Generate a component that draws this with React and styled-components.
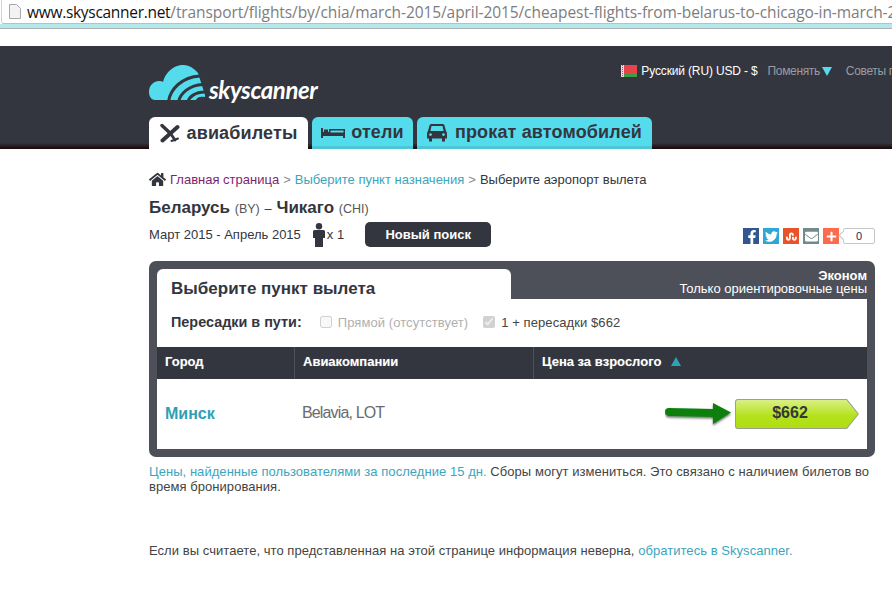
import React from 'react';
import styled, { createGlobalStyle } from 'styled-components';
import { FaHome, FaFacebookF, FaTwitter, FaStumbleupon, FaEnvelope, FaPlus } from 'react-icons/fa';

const Global = createGlobalStyle`
  html, body { margin: 0; padding: 0; background: #fff; overflow: hidden; }
  body { font-family: "Liberation Sans", Arial, sans-serif; color: #33363e; }
`;

const Page = styled.div`
  width: 892px;
  height: 605px;
  overflow: hidden;
`;

const AddressWrap = styled.div`
  height: 28px;
  border-bottom: 1px solid #aeb1b4;
  background: linear-gradient(#fff 24px, #b4e9ec 24px);
`;

const AddressBar = styled.div`
  height: 23px;
  margin-left: 1px;
  display: flex;
  align-items: center;
  gap: 6px;
  padding-left: 7px;
  background: #fff;
  border-left: 1px solid #b5dfe2;
  border-bottom: 1px solid #a9c6ca;
  border-bottom-left-radius: 3px;
  white-space: nowrap;
  overflow: hidden;
  font-family: "Open Sans", sans-serif;
  font-size: 15.5px;
  letter-spacing: -0.08px;
  color: #7d7d7d;
  svg { flex-shrink: 0; }
`;

const Host = styled.span`
  color: #111;
  letter-spacing: -0.3px;
`;

const Header = styled.header`
  margin-top: 17px;
  height: 103px;
  background: linear-gradient(#33363e 97px, #1a0708 103px);
  padding-left: 149px;
  box-sizing: border-box;
  display: flex;
  flex-direction: column;
  overflow: hidden;
`;

const TopRow = styled.div`
  height: 71px;
  display: flex;
  align-items: flex-start;
  white-space: nowrap;
`;

const Logo = styled.div`
  display: flex;
  align-items: flex-end;
  width: 170px;
  margin-top: 19px;
`;

const LogoText = styled.span`
  font-family: Lato, sans-serif;
  font-weight: 700;
  font-style: italic;
  font-size: 24px;
  line-height: 24px;
  letter-spacing: -0.4px;
  color: #fff;
  margin: 0 0 -1px 4px;
`;

const Locale = styled.div`
  display: flex;
  align-items: center;
  margin-left: 304px;
  margin-top: 18px;
  font-size: 12px;
  line-height: 14px;
  color: #fff;
`;

const LocaleText = styled.span`
  margin-left: 4px;
  letter-spacing: -0.15px;
`;

const Swap = styled.span`
  color: #9a9ca2;
  margin-left: 10px;
  letter-spacing: -0.35px;
`;

const Caret = styled.span`
  width: 0;
  height: 0;
  margin-left: 2px;
  border-left: 5px solid transparent;
  border-right: 5px solid transparent;
  border-top: 9px solid #55dcec;
`;

const Tips = styled(Swap)`
  margin-left: 14px;
`;

const Tabs = styled.nav`
  display: flex;
  gap: 4px;
`;

const Tab = styled.div`
  height: 32px;
  width: ${p => p.$width}px;
  box-sizing: border-box;
  display: flex;
  align-items: center;
  justify-content: center;
  gap: ${p => p.$gap || 4}px;
  border-radius: 6px 6px 0 0;
  font-size: 18px;
  font-weight: 700;
  letter-spacing: 0.15px;
  background: ${p => (p.$active ? '#fff' : '#55dcec')};
  border-bottom: ${p => (p.$active ? '0' : '3px solid #4bc6d6')};
  padding-top: ${p => (p.$active ? '0' : '2px')};
`;

const Main = styled.main`
  padding: 21px 17px 0 149px;
`;

const Crumbs = styled.div`
  display: flex;
  align-items: center;
  height: 18px;
  font-size: 13px;
  gap: 4px;
  white-space: pre;
`;

const Crumb = styled.span`
  color: ${p => p.$color || '#33363e'};
`;

const Title = styled.h1`
  margin: 11px 0 0;
  font-size: 17px;
  line-height: 18px;
  font-weight: 700;
`;

const Code = styled.span`
  font-size: 12.5px;
  font-weight: 400;
  color: #555;
`;

const Dash = styled.span`
  font-weight: 400;
  font-size: 13px;
`;

const MetaRow = styled.div`
  display: flex;
  align-items: center;
  height: 25px;
  margin-top: 4px;
  font-size: 13px;
`;

const PersonIcon = styled.svg`
  margin: 0 2px 0 12px;
`;

const NewSearch = styled.button`
  margin-left: 21px;
  width: 126px;
  height: 25px;
  border: 0;
  border-radius: 5px;
  background: #33363e;
  color: #fff;
  font-family: inherit;
  font-size: 13px;
  font-weight: 700;
`;

const Share = styled.div`
  margin-left: auto;
  display: flex;
  align-items: center;
  gap: 4px;
  margin-top: 3px;
`;

const ShareIcon = styled.span`
  width: 16px;
  height: 16px;
  display: flex;
  align-items: ${p => (p.$low ? 'flex-end' : 'center')};
  justify-content: ${p => (p.$low ? 'flex-end' : 'center')};
  background: ${p => p.$bg};
  color: #fff;
  font-size: ${p => p.$size || 11}px;
  overflow: hidden;
`;

const Count = styled.span`
  position: relative;
  width: 30px;
  height: 14px;
  border: 1px solid #c6c6c6;
  border-radius: 2px;
  font-size: 11px;
  line-height: 14px;
  text-align: center;
  color: #1b2a55;
  &::before {
    content: '';
    position: absolute;
    left: -4px;
    top: 3px;
    width: 6px;
    height: 6px;
    background: #fff;
    border-left: 1px solid #c6c6c6;
    border-bottom: 1px solid #c6c6c6;
    transform: rotate(45deg);
  }
`;

const Panel = styled.section`
  margin-top: 14px;
  background: #4d5059;
  border-radius: 7px;
  padding: 8px;
`;

const PanelTop = styled.div`
  display: flex;
  justify-content: space-between;
  height: 30px;
`;

const PanelTab = styled.h2`
  margin: 0;
  width: 354px;
  box-sizing: border-box;
  padding-left: 14px;
  background: #fff;
  border-radius: 6px 6px 0 0;
  font-size: 17px;
  line-height: 40px;
  font-weight: 700;
`;

const Cabin = styled.div`
  text-align: right;
  font-size: 13px;
  line-height: 13px;
  color: #fff;
`;

const Strong = styled.div`
  font-weight: 700;
`;

const PanelBody = styled.div`
  background: #fff;
`;

const Stops = styled.div`
  display: flex;
  align-items: center;
  height: 46px;
  padding: 0 0 2px 14px;
  font-size: 13px;
`;

const StopsLabel = styled.strong`
  font-size: 14.4px;
  margin-right: 18px;
`;

const Check = styled.input`
  margin: 0 6px 0 0;
  width: 12px;
  height: 12px;
`;

const Option = styled.label`
  display: flex;
  align-items: center;
  margin-right: 15px;
  letter-spacing: 0.08px;
  color: ${p => (p.$off ? '#b0b0b0' : '#444')};
`;

const Thead = styled.div`
  display: grid;
  grid-template-columns: 137px 239px 1fr;
  height: 32px;
  background: #33363e;
  color: #fff;
  font-size: 13px;
  font-weight: 700;
  text-shadow: 0 0 1px rgba(255, 255, 255, 0.3);
`;

const Th = styled.div`
  display: flex;
  align-items: center;
  padding: 0 0 3px 8px;
  border-left: ${p => (p.$first ? '0' : '1px solid #4d5059')};
`;

const SortUp = styled.span`
  margin-left: 10px;
  width: 0;
  height: 0;
  border-left: 5px solid transparent;
  border-right: 5px solid transparent;
  border-bottom: 9px solid #2aa5b8;
`;

const Row = styled.div`
  display: grid;
  grid-template-columns: 137px 239px 1fr;
  height: 70px;
  align-items: center;
`;

const City = styled.div`
  padding-left: 8px;
  font-size: 16px;
  font-weight: 700;
  color: #2f9fb5;
`;

const Airlines = styled.div`
  padding: 0 0 2px 8px;
  font-size: 16px;
  letter-spacing: -0.85px;
  color: #6b6b6b;
`;

const PriceCell = styled.div`
  display: flex;
  align-items: center;
  justify-content: flex-end;
  padding-right: 8px;
  gap: 2px;
`;

const PriceButton = styled.div`
  position: relative;
  width: 124px;
  height: 30px;
  background: #9a9f8e;
  clip-path: path('M3 0 H112 L124 15 L112 30 H3 Q0 30 0 27 V3 Q0 0 3 0 Z');
  &::before {
    content: '';
    position: absolute;
    inset: 0;
    background: linear-gradient(#dcf08c, #b4e31e 55%, #aedd10);
    clip-path: path('M3 1 H111.5 L122.8 15 L111.5 29 H3 Q1 29 1 27 V3 Q1 1 3 1 Z');
  }
`;

const PriceText = styled.span`
  position: absolute;
  inset: 0;
  text-align: center;
  font-size: 16px;
  font-weight: 700;
  line-height: 28px;
  color: #33363e;
  padding-right: 14px;
`;

const Note = styled.p`
  margin: 7px 0 0;
  font-size: 13px;
  line-height: 15px;
  letter-spacing: 0.05px;
  color: #444;
`;

const TealLink = styled.span`
  color: #3aa6bd;
`;

const Report = styled(Note)`
  margin-top: 49px;
`;

function SkyLogo() {
  return (
    <svg width="56" height="36" viewBox="0 0 56 36">
      <path
        fill="#55dcec"
        d="M6 35 C2 35 0 31 0 27 C0 20 5 16 10 16 C12 16 13 16 14 17 C16 8 24 1 32 0 C39 -0.5 45 3 49 8 L56 30 L56 35 Z"
      />
      <g fill="none" stroke="#33363e" strokeWidth="3">
        <path d="M19.5 37 C21 24 33 12 51 11" />
        <path d="M29.5 37 C31 29 40 20 54 19.5" />
        <path d="M39 37 C40 32 46 27 56 27" />
      </g>
      <path fill="#33363e" d="M46 37 C47 33 50 31 56 32 V37 Z" />
    </svg>
  );
}

function PlaneIcon() {
  return (
    <svg width="20" height="20" viewBox="0 0 20 20">
      <g fill="none" stroke="#33363e" strokeLinecap="round">
        <path strokeWidth="4" d="M2.5 17.5 L17.5 4" />
        <path strokeWidth="3.4" d="M2 2.5 L10.5 10.5" />
        <path strokeWidth="2.8" d="M10.5 10.5 L15 17" />
        <path strokeWidth="2" d="M11.5 18 L18 15.5" />
      </g>
    </svg>
  );
}

function BedIcon() {
  return (
    <svg width="24" height="10" viewBox="0 0 24 10">
      <path fill="#33363e" d="M0 0 H2 V4 H3 V1.5 H7 V4 H8 V1 H24 V10 H22 V8 H2 V10 H0 Z M9.5 2.5 V4.5 H22.5 V2.5 Z" fillRule="evenodd" />
    </svg>
  );
}

function CarIcon() {
  return (
    <svg width="20" height="18" viewBox="0 0 20 18">
      <path
        fill="#33363e"
        fillRule="evenodd"
        d="M4 0 H16 Q17 0 17.5 1.5 L19 7 Q20 8 20 10 V14.5 H18 V17.5 H15 V14.5 H5 V17.5 H2 V14.5 H0 V10 Q0 8 1 7 L2.5 1.5 Q3 0 4 0 Z M4.5 2 L3.4 7 H16.6 L15.5 2 Z M3.5 9.2 A1.4 1.4 0 1 0 3.5 12 A1.4 1.4 0 1 0 3.5 9.2 Z M16.5 9.2 A1.4 1.4 0 1 0 16.5 12 A1.4 1.4 0 1 0 16.5 9.2 Z"
      />
    </svg>
  );
}

function Person() {
  return (
    <PersonIcon width="12" height="24" viewBox="0 0 12 24">
      <circle cx="6" cy="3.2" r="3.2" fill="#33363e" />
      <path fill="#33363e" d="M1.5 7 H10.5 Q12 7 12 8.5 V15 H10 V24 H2 V15 H0 V8.5 Q0 7 1.5 7 Z" />
    </PersonIcon>
  );
}

function Flag() {
  return (
    <svg width="16" height="12" viewBox="0 0 16 12">
      <rect width="16" height="8" fill="#e8424a" />
      <rect y="8" width="16" height="4" fill="#3f9a45" />
      <rect width="3" height="12" fill="#f6d4d4" />
      <path stroke="#c9484c" strokeDasharray="1 1" d="M1.5 0 V12" />
    </svg>
  );
}

function GreenArrow() {
  return (
    <svg width="68" height="28" viewBox="0 0 68 28">
      <defs>
        <filter id="arrowShadow" x="-10%" y="-20%" width="120%" height="150%">
          <feDropShadow dx="0" dy="1.5" stdDeviation="1.2" floodColor="#000" floodOpacity="0.6" />
        </filter>
      </defs>
      <path
        fill="#0a7f0e"
        filter="url(#arrowShadow)"
        d="M4 8 L48 9 L48 3 L66 12.5 L48 24 L48 17 L4 16 Q0 15 0 12 Q0 8 4 8 Z"
      />
    </svg>
  );
}

export default function App() {
  return (
    <Page>
      <Global />
      <AddressWrap>
        <AddressBar>
          <svg width="12" height="15" viewBox="0 0 12 15">
            <path fill="#f3f3f3" stroke="#a8a8a8" d="M.5.5 H7.5 L11.5 4.5 V14.5 H.5 Z" />
          </svg>
          <span>
            <Host>www.skyscanner.net</Host>/transport/flights/by/chia/march-2015/april-2015/cheapest-flights-from-belarus-to-chicago-in-march-2015
          </span>
        </AddressBar>
      </AddressWrap>

      <Header>
        <TopRow>
          <Logo>
            <SkyLogo />
            <LogoText>skyscanner</LogoText>
          </Logo>
          <Locale>
            <Flag />
            <LocaleText>Русский (RU) USD - $</LocaleText>
            <Swap>Поменять</Swap>
            <Caret />
            <Tips>Советы по поиску</Tips>
          </Locale>
        </TopRow>
        <Tabs>
          <Tab $active $width={159} $gap={7}><PlaneIcon />авиабилеты</Tab>
          <Tab $width={101} $gap={6}><BedIcon />отели</Tab>
          <Tab $width={235} $gap={8}><CarIcon />прокат автомобилей</Tab>
        </Tabs>
      </Header>

      <Main>
        <Crumbs>
          <FaHome size={17} />
          <Crumb $color="#7d1f6f">Главная страница</Crumb>
          <Crumb $color="#888">&gt;</Crumb>
          <Crumb $color="#3aa6bd">Выберите пункт назначения</Crumb>
          <Crumb $color="#888">&gt;</Crumb>
          <Crumb>Выберите аэропорт вылета</Crumb>
        </Crumbs>
        <Title>
          Беларусь <Code>(BY)</Code> <Dash>–</Dash> Чикаго <Code>(CHI)</Code>
        </Title>
        <MetaRow>
          Март 2015 - Апрель 2015
          <Person />
          x 1
          <NewSearch>Новый поиск</NewSearch>
          <Share>
            <ShareIcon $bg="#32568f" $size={14} $low><FaFacebookF /></ShareIcon>
            <ShareIcon $bg="#2ca7d6" $size={13}><FaTwitter /></ShareIcon>
            <ShareIcon $bg="#e9532a"><FaStumbleupon /></ShareIcon>
            <ShareIcon $bg="#738a8d" $size={13}><FaEnvelope /></ShareIcon>
            <ShareIcon $bg="#fd6b4c"><FaPlus /></ShareIcon>
            <Count>0</Count>
          </Share>
        </MetaRow>

        <Panel>
          <PanelTop>
            <PanelTab>Выберите пункт вылета</PanelTab>
            <Cabin>
              <Strong>Эконом</Strong>
              Только ориентировочные цены
            </Cabin>
          </PanelTop>
          <PanelBody>
            <Stops>
              <StopsLabel>Пересадки в пути:</StopsLabel>
              <Option $off><Check type="checkbox" disabled />Прямой (отсутствует)</Option>
              <Option><Check type="checkbox" disabled defaultChecked />1 + пересадки $662</Option>
            </Stops>
            <Thead>
              <Th $first>Город</Th>
              <Th>Авиакомпании</Th>
              <Th>Цена за взрослого<SortUp /></Th>
            </Thead>
            <Row>
              <City>Минск</City>
              <Airlines>Belavia, LOT</Airlines>
              <PriceCell>
                <GreenArrow />
                <PriceButton><PriceText>$662</PriceText></PriceButton>
              </PriceCell>
            </Row>
          </PanelBody>
        </Panel>

        <Note>
          <TealLink>Цены, найденные пользователями за последние 15 дн.</TealLink> Сборы могут измениться. Это связано с наличием билетов во время бронирования.
        </Note>
        <Report>
          Если вы считаете, что представленная на этой странице информация неверна, <TealLink>обратитесь в Skyscanner.</TealLink>
        </Report>
      </Main>
    </Page>
  );
}
